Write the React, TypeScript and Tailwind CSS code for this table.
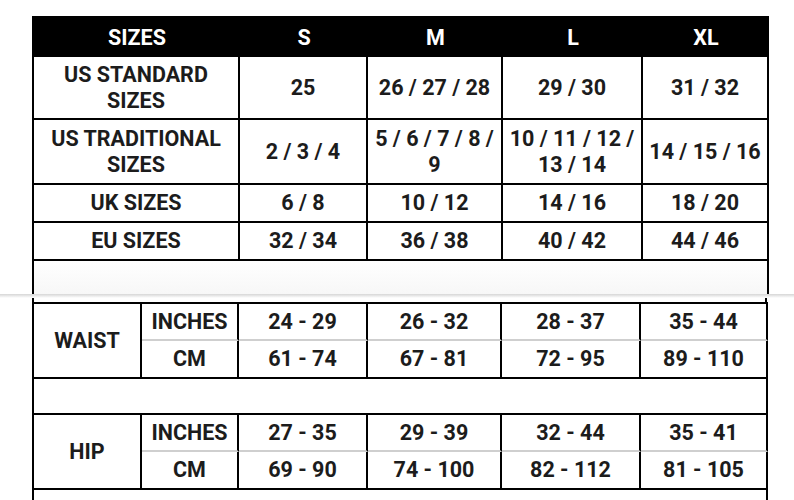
import React from 'react';

const topCols = ['S', 'M', 'L', 'XL'];

const topRows: { label: React.ReactNode; values: React.ReactNode[]; h: string }[] = [
  {
    label: <>US STANDARD<br />SIZES</>,
    values: ['25', '26 / 27 / 28', '29 / 30', '31 / 32'],
    h: 'h-[63px]',
  },
  {
    label: <>US TRADITIONAL<br />SIZES</>,
    values: ['2 / 3 / 4', <>5 / 6 / 7 / 8 /<br />9</>, <>10 / 11 / 12 /<br />13 / 14</>, '14 / 15 / 16'],
    h: 'h-[65px]',
  },
  { label: 'UK SIZES', values: ['6 / 8', '10 / 12', '14 / 16', '18 / 20'], h: 'h-[38px]' },
  { label: 'EU SIZES', values: ['32 / 34', '36 / 38', '40 / 42', '44 / 46'], h: 'h-[38px]' },
];

const measures = [
  {
    name: 'WAIST',
    inches: ['24 - 29', '26 - 32', '28 - 37', '35 - 44'],
    cm: ['61 - 74', '67 - 81', '72 - 95', '89 - 110'],
  },
  {
    name: 'HIP',
    inches: ['27 - 35', '29 - 39', '32 - 44', '35 - 41'],
    cm: ['69 - 90', '74 - 100', '82 - 112', '81 - 105'],
  },
];

const cell = 'flex items-center justify-center text-center border-r-2 border-b-2 border-black';

function MeasureBlock({ m }: { m: (typeof measures)[number] }) {
  return (
    <>
      <div className={`${cell} row-span-2`}>{m.name}</div>
      <div className={`${cell} !border-b-[#cfcfcf]`}>INCHES</div>
      {m.inches.map((v, i) => (
        <div key={`i${i}`} className={`${cell} !border-b-[#cfcfcf]`}>{v}</div>
      ))}
      <div className={cell}>CM</div>
      {m.cm.map((v, i) => (
        <div key={`c${i}`} className={cell}>{v}</div>
      ))}
    </>
  );
}

export default function App() {
  return (
    <div className="w-[794px] h-[500px] overflow-hidden bg-white font-['Roboto',sans-serif] text-[21.5px] font-bold leading-[26px] text-[#1c1c1c]">
      {/* upper chart */}
      <div className="h-[294px] pl-[32px] pt-[16px]">
        <div className="grid w-[737px] grid-cols-[206px_128px_135px_140px_126px] border-l-2 border-t-2 border-black">
          <div className="flex h-[39px] items-center justify-center bg-black text-white">SIZES</div>
          {topCols.map((c) => (
            <div key={c} className="flex h-[39px] items-center justify-center bg-black text-white">
              {c}
            </div>
          ))}
          {topRows.map((r, ri) => (
            <React.Fragment key={ri}>
              <div className={`${cell} ${r.h}`}>{r.label}</div>
              {r.values.map((v, vi) => (
                <div key={vi} className={`${cell} ${r.h}`}>{v}</div>
              ))}
            </React.Fragment>
          ))}
          <div className="col-span-5 h-[33px] border-r-2 border-black bg-gradient-to-b from-white to-[#f7f7f7]" />
        </div>
      </div>

      <div className="h-[4px] bg-gradient-to-b from-[#d6d6d6] to-white" />

      {/* lower chart */}
      <div className="pl-[32px]">
        <div className="h-[4px] w-[735px] border-x-2 border-black" />
        <div className="grid w-[736px] grid-cols-[108px_97px_129px_134px_139px_127px] grid-rows-[37px_38px_36px_37px_38px_20px] border-l-2 border-t-2 border-black">
          <MeasureBlock m={measures[0]} />
          <div className="col-span-6 border-r-2 border-b-2 border-black" />
          <MeasureBlock m={measures[1]} />
          <div className="col-span-6 border-r-2 border-black" />
        </div>
      </div>
    </div>
  );
}
